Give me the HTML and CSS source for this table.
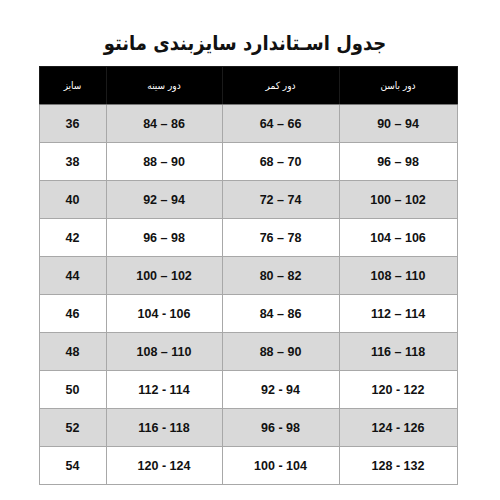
FILE: index.html
```html
<!DOCTYPE html>
<html lang="fa">
<head>
<meta charset="utf-8">
<link rel="stylesheet" href="styles.css">
</head>
<body>
<div class="page">
  <h1 class="title" dir="rtl">جدول اسـتاندارد سایزبندی مانتو</h1>
  <table class="sizes" dir="rtl">
    <thead>
      <tr>
        <th class="c-hip">دور باسن</th>
        <th class="c-waist">دور کمر</th>
        <th class="c-chest">دور سینه</th>
        <th class="c-size">سایز</th>
      </tr>
    </thead>
    <tbody>
      <tr class="alt"><td>90 – 94</td><td>64 – 66</td><td>84 – 86</td><td>36</td></tr>
      <tr><td>96 – 98</td><td>68 – 70</td><td>88 – 90</td><td>38</td></tr>
      <tr class="alt"><td>100 – 102</td><td>72 – 74</td><td>92 – 94</td><td>40</td></tr>
      <tr><td>104 – 106</td><td>76 – 78</td><td>96 – 98</td><td>42</td></tr>
      <tr class="alt"><td>108 – 110</td><td>80 – 82</td><td>100 – 102</td><td>44</td></tr>
      <tr><td>112 – 114</td><td>84 – 86</td><td>104 - 106</td><td>46</td></tr>
      <tr class="alt"><td>116 – 118</td><td>88 – 90</td><td>108 – 110</td><td>48</td></tr>
      <tr><td>120 - 122</td><td>92 - 94</td><td>112 - 114</td><td>50</td></tr>
      <tr class="alt"><td>124 - 126</td><td>96 - 98</td><td>116 - 118</td><td>52</td></tr>
      <tr><td>128 - 132</td><td>100 - 104</td><td>120 - 124</td><td>54</td></tr>
    </tbody>
  </table>
</div>
</body>
</html>
```

FILE: styles.css
```css
html, body {
  margin: 0;
  padding: 0;
  background: #ffffff;
}

.page {
  width: 500px;
  height: 500px;
  display: flex;
  flex-direction: column;
  align-items: center;
  padding-top: 25px;
  box-sizing: border-box;
}

.title {
  margin: 0 0 0 -10px;
  height: 41px;
  line-height: 36px;
  font-family: "DejaVu Sans Condensed", "DejaVu Sans", sans-serif;
  font-weight: bold;
  font-size: 20px;
  color: #111111;
  text-align: center;
}

.sizes {
  border-collapse: collapse;
  width: 414px;
  margin-left: -4px;
  table-layout: fixed;
  font-family: "Liberation Sans", Arial, sans-serif;
}

.sizes th {
  background: #000000;
  color: #ffffff;
  font-family: "DejaVu Sans Condensed", "DejaVu Sans", sans-serif;
  font-weight: normal;
  font-size: 10px;
  height: 37px;
  padding: 0;
  border: 1px solid #1a1a1a;
  border-bottom: 1px solid #777777;
}

.sizes td {
  height: 37px;
  padding: 0;
  text-align: center;
  direction: ltr;
  font-weight: bold;
  font-size: 12.5px;
  color: #111111;
  border: 1px solid #a8a8a8;
}

.sizes tr.alt td {
  background: #d9d9d9;
}

.c-size { width: 66px; }
.c-chest { width: 115px; }
.c-waist { width: 116px; }
.c-hip { width: 117px; }
```
